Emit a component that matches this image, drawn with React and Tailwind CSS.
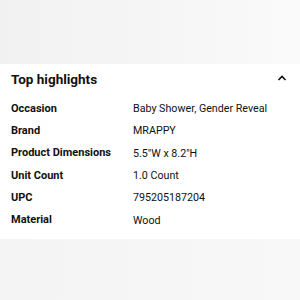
export default function App() {
  const rows = [
    ["Occasion", "Baby Shower, Gender Reveal"],
    ["Brand", "MRAPPY"],
    ["Product Dimensions", "5.5\"W x 8.2\"H"],
    ["Unit Count", "1.0 Count"],
    ["UPC", "795205187204"],
    ["Material", "Wood"],
  ];

  return (
    <div className="w-[300px] h-[300px] flex flex-col bg-[#f5f5f5] font-['Roboto',sans-serif] text-[#0f1111]">
      <div className="h-[64px] bg-gradient-to-r from-[#f1f1f1] to-[#fafafa]" />
      <div className="bg-white pl-[11px] pr-[12px] pt-[3px] pb-[7px]">
        <div className="flex items-center justify-between h-[24px]">
          <h2 className="text-[13.5px] font-bold">Top highlights</h2>
          <svg width="10" height="8" viewBox="0 0 10 8" className="mr-[1px] -mt-[3px]">
            <path d="M1.5 6 L5 2.5 L8.5 6" fill="none" stroke="#0f1111" strokeWidth="1.6" />
          </svg>
        </div>
        <div className="mt-[7px]">
          {rows.map(([k, v]) => (
            <div key={k} className="flex items-center h-[22.3px] text-[11px]">
              <div className="w-[122px] font-bold">{k}</div>
              <div className="text-[10.7px]">{v}</div>
            </div>
          ))}
        </div>
      </div>
      <div className="flex-1 bg-gradient-to-r from-[#f4f4f4] to-[#f8f8f8]" />
    </div>
  );
}
